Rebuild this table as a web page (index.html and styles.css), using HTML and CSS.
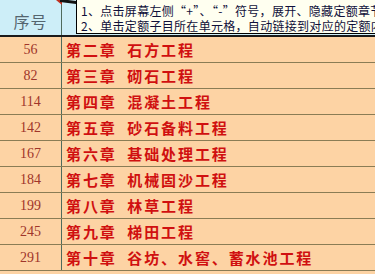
FILE: index.html
```html
<!DOCTYPE html>
<html>
<head>
<meta charset="utf-8">
<link rel="stylesheet" href="styles.css">
</head>
<body>
<div class="sheet">
  <div class="header">
    <div class="cell-no head-no">序号</div>
    <div class="cell-title head-title"></div>
    <div class="indicator"></div>
    <div class="arrow-line"></div>
    <div class="comment">
      <div class="comment-line">1、点击屏幕左侧“+”、“-”符号，展开、隐藏定额章节</div>
      <div class="comment-line">2、单击定额子目所在单元格，自动链接到对应的定额内容</div>
    </div>
  </div>
  <div class="row"><div class="cell-no">56</div><div class="cell-title">第二章&nbsp;&nbsp;石方工程</div></div>
  <div class="row"><div class="cell-no">82</div><div class="cell-title">第三章&nbsp;&nbsp;砌石工程</div></div>
  <div class="row"><div class="cell-no">114</div><div class="cell-title">第四章&nbsp;&nbsp;混凝土工程</div></div>
  <div class="row"><div class="cell-no">142</div><div class="cell-title">第五章&nbsp;&nbsp;砂石备料工程</div></div>
  <div class="row"><div class="cell-no">167</div><div class="cell-title">第六章&nbsp;&nbsp;基础处理工程</div></div>
  <div class="row"><div class="cell-no">184</div><div class="cell-title">第七章&nbsp;&nbsp;机械固沙工程</div></div>
  <div class="row"><div class="cell-no">199</div><div class="cell-title">第八章&nbsp;&nbsp;林草工程</div></div>
  <div class="row"><div class="cell-no">245</div><div class="cell-title">第九章&nbsp;&nbsp;梯田工程</div></div>
  <div class="row"><div class="cell-no">291</div><div class="cell-title">第十章&nbsp;&nbsp;谷坊、水窖、蓄水池工程</div></div>
</div>
</body>
</html>
```

FILE: styles.css
```css
html, body {
  margin: 0;
  padding: 0;
  background: #fdd3a4;
  overflow: hidden;
}

.sheet {
  width: 375px;
  height: 274px;
  overflow: hidden;
  background: #fdd3a4;
}

.header {
  position: relative;
  display: grid;
  grid-template-columns: 62px 1fr;
  height: 35px;
  background: #cdeef8;
  border-bottom: 2px solid #1a1a1a;
}

.row {
  display: grid;
  grid-template-columns: 62px 1fr;
  height: 25px;
  border-bottom: 1px solid #8a7c55;
  background: #fdd3a4;
}

.cell-no {
  border-right: 1px solid #4f6b5c;
  display: flex;
  align-items: center;
  justify-content: center;
  font-family: "Liberation Serif", "DejaVu Serif", serif;
  font-size: 14px;
  color: #a0352a;
  padding-top: 1px;
}

.head-no {
  font-family: "Noto Sans CJK SC", sans-serif;
  font-size: 16px;
  color: #55656f;
  padding-top: 6px;
  letter-spacing: 1px;
}

.cell-title {
  display: flex;
  align-items: center;
  padding-left: 4px;
  font-family: "Noto Sans CJK SC", sans-serif;
  font-weight: 700;
  font-size: 15px;
  letter-spacing: 1.9px;
  color: #d01010;
  white-space: nowrap;
}

.indicator {
  position: absolute;
  left: 56px;
  top: 0;
  width: 0;
  height: 0;
  border-left: 6px solid transparent;
  border-top: 5px solid #c03020;
}

.arrow-line {
  position: absolute;
  left: 60px;
  top: 0;
  width: 16px;
  height: 3px;
  background: #111;
  transform: skewY(8deg);
}

.comment {
  position: absolute;
  left: 76px;
  top: 0;
  width: 320px;
  height: 30px;
  background: #fffff0;
  border-left: 1px solid #000;
  border-bottom: 1px solid #000;
  padding-left: 4px;
  padding-top: 3px;
  font-family: "Noto Sans CJK SC", sans-serif;
  font-size: 12px;
  line-height: 15px;
  letter-spacing: 0.3px;
  color: #10103a;
  white-space: nowrap;
  overflow: hidden;
}

.comment-line {
  height: 15px;
}
```
